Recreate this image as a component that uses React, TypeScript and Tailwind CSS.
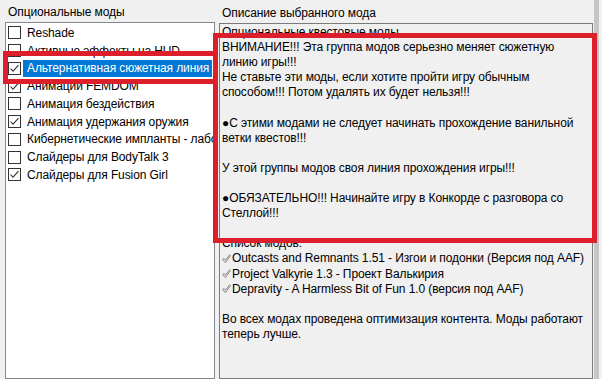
import React from 'react';

const FONT = { fontFamily: '"Liberation Sans", "Noto Sans", Arial, sans-serif' };

const MODS: { name: string; checked: boolean; selected?: boolean }[] = [
  { name: 'Reshade', checked: false },
  { name: 'Активные эффекты на HUD', checked: false },
  { name: 'Альтернативная сюжетная линия', checked: true, selected: true },
  { name: 'Анимации FEMDOM', checked: true },
  { name: 'Анимация бездействия', checked: false },
  { name: 'Анимация удержания оружия', checked: true },
  { name: 'Кибернетические импланты - лаборатория', checked: false },
  { name: 'Слайдеры для BodyTalk 3', checked: false },
  { name: 'Слайдеры для Fusion Girl', checked: true },
];

type Line = { text?: string; check?: boolean };

const DESCRIPTION: Line[] = [
  { text: 'Опциональные квестовые моды' },
  { text: 'ВНИМАНИЕ!!! Эта группа модов серьезно меняет сюжетную' },
  { text: 'линию игры!!!' },
  { text: 'Не ставьте эти моды, если хотите пройти игру обычным' },
  { text: 'способом!!! Потом удалять их будет нельзя!!!' },
  {},
  { text: '●С этими модами не следует начинать прохождение ванильной' },
  { text: 'ветки квестов!!!' },
  {},
  { text: 'У этой группы модов своя линия прохождения игры!!!' },
  {},
  { text: '●ОБЯЗАТЕЛЬНО!!! Начинайте игру в Конкорде с разговора со' },
  { text: 'Стеллой!!!' },
  {},
  { text: 'Список модов:' },
  { text: 'Outcasts and Remnants 1.51 - Изгои и подонки (Версия под AAF)', check: true },
  { text: 'Project Valkyrie 1.3 - Проект Валькирия', check: true },
  { text: 'Depravity - A Harmless Bit of Fun 1.0 (версия под AAF)', check: true },
  {},
  { text: 'Во всех модах проведена оптимизация контента. Моды работают' },
  { text: 'теперь лучше.' },
];

function CheckBox({ checked }: { checked: boolean }) {
  return (
    <span className="flex h-[13px] w-[13px] shrink-0 items-center justify-center border border-[#333333] bg-white">
      {checked && (
        <svg width="11" height="11" viewBox="0 0 11 11">
          <path d="M1.5 5.5 L4 8.2 L9.5 2.2" fill="none" stroke="#333333" strokeWidth="1.1" />
        </svg>
      )}
    </span>
  );
}

function OutlineCheck() {
  return (
    <svg width="9" height="10" viewBox="0 0 9 10" className="mr-[1px] shrink-0">
      <path
        d="M0.6 5.6 L2 4.4 L3.4 6.2 L7.6 0.8 L8.5 1.6 L3.4 8.6 Z"
        fill="none"
        stroke="#6b6b6b"
        strokeWidth="0.8"
        strokeLinejoin="round"
      />
    </svg>
  );
}

export default function App() {
  return (
    <div
      className="relative flex h-[379px] w-[602px] overflow-hidden bg-[#f0f0f0] text-[12px] tracking-[-0.1px] text-black"
      style={FONT}
    >
      {/* список модов */}
      <div className="flex w-[219px] shrink-0 flex-col pl-[5px] pt-[5px]">
        <div className="h-[15px] pl-[3px] leading-[15px]">Опциональные моды</div>
        <div className="mt-[2px] h-[400px] w-[210px] overflow-hidden border border-[#828790] bg-white pt-[1px]">
          {MODS.map((m) => (
            <div key={m.name} className="flex h-[17.75px] items-center pl-[2px]">
              <CheckBox checked={m.checked} />
              <span
                className={
                  'ml-[2px] flex h-[17px] items-center whitespace-nowrap pl-[4px] pr-[3px] ' +
                  (m.selected ? 'bg-[#0078d7] text-white' : '')
                }
              >
                {m.name}
              </span>
            </div>
          ))}
        </div>
      </div>

      {/* описание */}
      <div className="flex flex-col pt-[6px]">
        <div className="h-[15px] pl-[3px] leading-[15px]">Описание выбранного мода</div>
        <div className="mt-[2px] h-[400px] w-[374px] border border-[#7a7a7a] bg-[#f0f0f0] pl-[2px] pt-[1px]">
          {DESCRIPTION.map((l, i) => (
            <div key={i} className="flex h-[15.1px] items-center whitespace-nowrap leading-[15px]">
              {l.check && <OutlineCheck />}
              {l.text ?? ''}
            </div>
          ))}
        </div>
      </div>

      <div className="ml-[1px] h-full w-[5px] bg-[#c6c6c6]" />

      {/* красные рамки поверх */}
      <div className="pointer-events-none absolute left-[3px] top-[51px] h-[33px] w-[215px] border-[5px] border-[#dc1f2a]" />
      <div className="pointer-events-none absolute left-[213px] top-[33px] h-[210px] w-[384px] border-[5px] border-[#dc1f2a]" />
    </div>
  );
}
